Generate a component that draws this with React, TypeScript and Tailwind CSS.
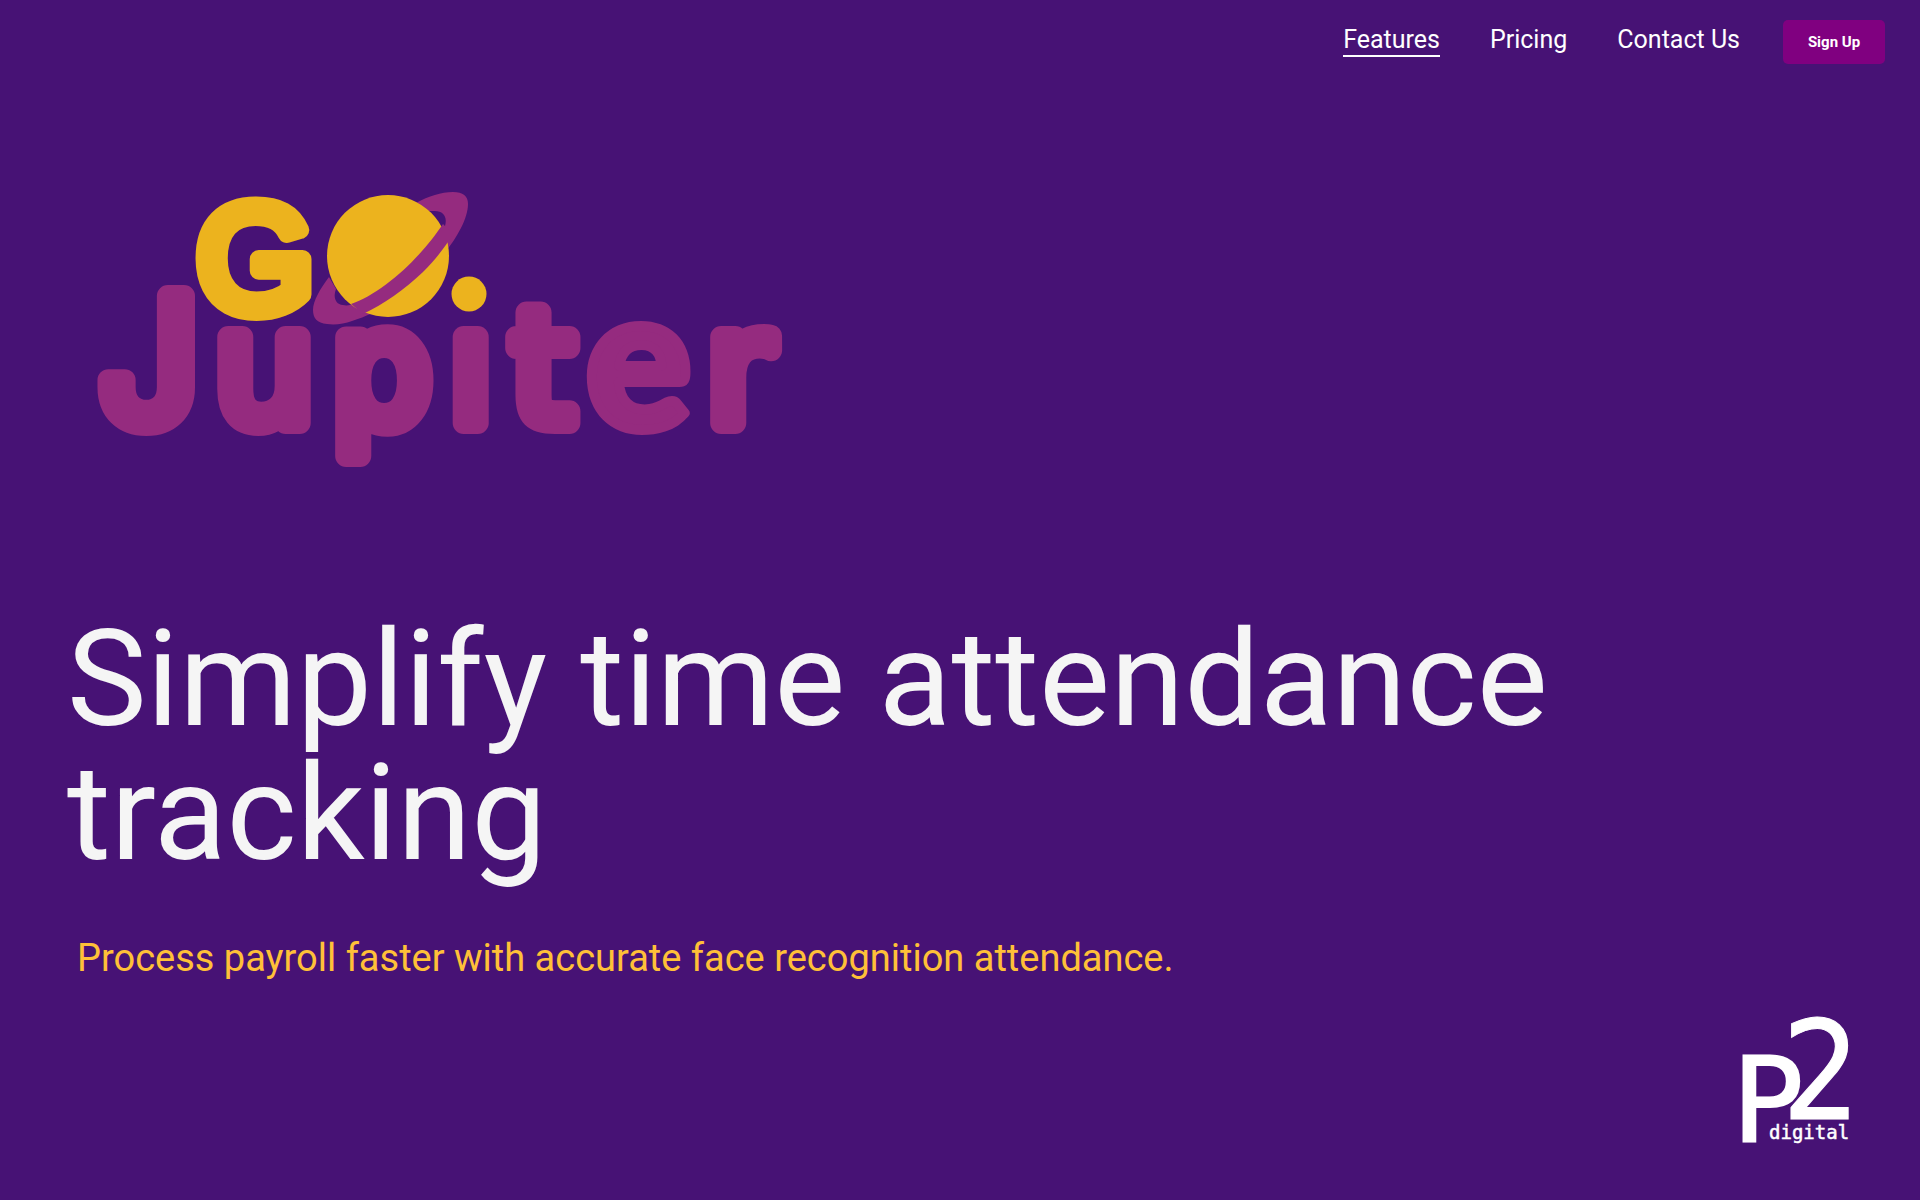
const navLinks = [
  { label: "Features", active: true },
  { label: "Pricing", active: false },
  { label: "Contact Us", active: false },
];

function JupiterLogo() {
  return (
    <svg viewBox="0 0 720 320" className="w-[720px] max-w-full" role="img" aria-label="Go. Jupiter">
      <g
        fill="#952b7f"
        stroke="#952b7f"
        strokeWidth="22"
        strokeLinejoin="round"
        fontFamily="'DejaVu Sans', sans-serif"
        fontSize="156"
      >
        <text x="20" y="240" fontFamily="Inter, sans-serif" fontSize="174">J</text>
        <text x="135" y="240">u</text>
        <text x="252" y="240">p</text>
        <text x="369" y="240">ı</text>
        <text x="432" y="240">t</text>
        <text x="506" y="246" fontFamily="Lato, sans-serif" fontWeight="900" fontSize="196" strokeWidth="10">e</text>
        <text x="627" y="240">r</text>
      </g>
      <text
        x="117"
        y="128"
        fill="#ecb31e"
        stroke="#ecb31e"
        strokeWidth="18"
        strokeLinejoin="round"
        fontFamily="'Liberation Sans', sans-serif"
        fontSize="150"
      >
        G
      </text>
      <g transform="translate(-3 0)">
        <path
          d="M339 20C352 13 364 9 376 9C386 9 391 13 391 21C391 39 374 65 353 87C331 110 302 130 275 138C267 141 258 142 250 141C240 140 236 135 236 127C236 118 243 106 252 94L259 106C256 113 258 122 266 122C270 123 274 122 279 120L366 48C372 36 368 27 356 28L351 28Z"
          fill="#952b7f"
        />
        <circle cx="311" cy="73" r="61" fill="#ecb31e" />
        <path
          d="M274 121C296 114 325 91 345 68C354 58 361 48 366 41L376 51C369 63 359 76 346 89C327 107 307 121 286 131Z"
          fill="#952b7f"
        />
        <circle cx="392" cy="111" r="17.5" fill="#ecb31e" />
      </g>
    </svg>
  );
}

function P2Logo() {
  return (
    <svg viewBox="-16 -16 136 160" className="w-[136px]" role="img" aria-label="P2 digital">
      <g fill="#ffffff" stroke="#ffffff">
        <text x="-10" y="128" fontFamily="'DejaVu Sans', sans-serif" fontSize="118" strokeWidth="2">P</text>
        <text x="40" y="105" fontFamily="'DejaVu Sans Condensed', 'DejaVu Sans', sans-serif" fontSize="137" strokeWidth="1">2</text>
        <text x="27" y="125" fontFamily="'DejaVu Sans Mono', monospace" fontSize="19" strokeWidth="0.5">digital</text>
      </g>
    </svg>
  );
}

export default function App() {
  return (
    <div className="flex min-h-screen flex-col bg-[#471275] font-[Roboto,sans-serif]">
      <header className="flex items-start justify-end pt-5 pr-[35px]">
        <nav className="mt-[5px] mr-[43px] flex gap-[50px] text-[25px] leading-[30px] text-white">
          {navLinks.map((link) => (
            <a
              key={link.label}
              href="#"
              className={link.active ? "border-b-2 border-white" : "border-b-2 border-transparent"}
            >
              {link.label}
            </a>
          ))}
        </nav>
        <button
          type="button"
          className="h-11 w-[102px] rounded-[5px] bg-[#800080] text-[15px] font-bold text-white"
        >
          Sign Up
        </button>
      </header>
      <main className="flex flex-col pt-[119px] pl-[67px]">
        <div className="pl-[13px]">
          <JupiterLogo />
        </div>
        <h1 className="mt-[110px] max-w-[1700px] text-[134px] leading-[134px] text-[#f5f5f5]">
          Simplify time attendance tracking
        </h1>
        <p className="mt-12 pl-[10px] text-[38px] leading-[58px] text-[#ffc038]">
          Process payroll faster with accurate face recognition attendance.
        </p>
      </main>
      <footer className="mt-auto flex justify-end pr-[58px] pb-[42px]">
        <P2Logo />
      </footer>
    </div>
  );
}
